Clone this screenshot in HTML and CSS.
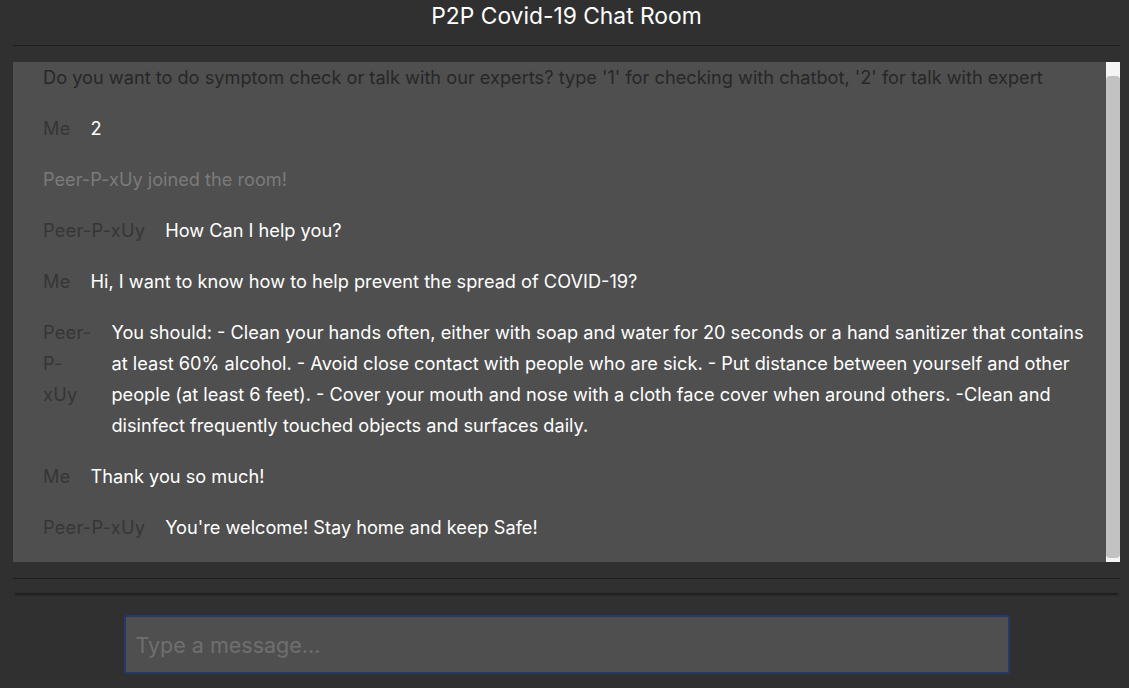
FILE: index.html
```html
<!DOCTYPE html>
<html lang="en">
<head>
<meta charset="utf-8">
<title>P2P Covid-19 Chat Room</title>
<link rel="stylesheet" href="styles.css">
</head>
<body>
<div class="app">
  <header class="header">
    <h1 class="title">P2P Covid-19 Chat Room</h1>
  </header>
  <section class="panel">
    <div class="messages">
      <div class="msg system-dark">Do you want to do symptom check or talk with our experts? type '1' for checking with chatbot, '2' for talk with expert</div>
      <div class="msg"><span class="sender">Me</span><span class="text">2</span></div>
      <div class="msg system">Peer-P-xUy joined the room!</div>
      <div class="msg"><span class="sender">Peer-P-xUy</span><span class="text">How Can I help you?</span></div>
      <div class="msg"><span class="sender">Me</span><span class="text">Hi, I want to know how to help prevent the spread of COVID-19?</span></div>
      <div class="msg"><span class="sender">Peer-P-xUy</span><span class="text">You should: - Clean your hands often, either with soap and water for 20 seconds or a hand sanitizer that contains at least 60% alcohol. - Avoid close contact with people who are sick. - Put distance between yourself and other people (at least 6 feet). - Cover your mouth and nose with a cloth face cover when around others. -Clean and disinfect frequently touched objects and surfaces daily.</span></div>
      <div class="msg"><span class="sender">Me</span><span class="text">Thank you so much!</span></div>
      <div class="msg"><span class="sender">Peer-P-xUy</span><span class="text">You're welcome! Stay home and keep Safe!</span></div>
    </div>
    <div class="scrollbar"><div class="thumb"></div></div>
  </section>
  <div class="divider"></div>
  <div class="shadow-line"></div>
  <form class="composer">
    <input class="input" type="text" placeholder="Type a message..." autofocus>
  </form>
</div>
</body>
</html>
```
FILE: styles.css
```css
html, body {
  margin: 0;
  padding: 0;
  background: #303030;
  height: 100%;
}
body {
  font-family: Inter, "Liberation Sans", sans-serif;
  color: #fff;
  overflow: hidden;
}
.app {
  padding: 0 9px 0 13px;
  display: flex;
  flex-direction: column;
}
.header {
  border-bottom: 1px solid #1d1d1d;
  padding-bottom: 13px;
}
.title {
  margin: 0;
  font-size: 22.8px;
  font-weight: 400;
  line-height: 32px;
  text-align: center;
  color: #fff;
}
.panel {
  margin-top: 16px;
  height: 500px;
  background: #4f4f4f;
  display: flex;
  overflow: hidden;
}
.messages {
  flex: 1;
  padding: 0 12px 0 30px;
  font-size: 18.2px;
  line-height: 31px;
}
.msg {
  display: flex;
  gap: 20px;
  margin-bottom: 20px;
}
.sender {
  color: #363636;
  flex: 0 1 auto;
  letter-spacing: 0.25px;
}
.text {
  flex: 1 1 auto;
  color: #fff;
}
.system-dark {
  color: #272727;
}
.system {
  color: #7b7b7b;
}
.scrollbar {
  width: 14px;
  flex: 0 0 14px;
  background: #f4f4f4;
  display: flex;
  justify-content: center;
  padding: 14px 0 4px;
  box-sizing: border-box;
}
.thumb {
  width: 8px;
  border-radius: 4px;
  background: #c2c2c2;
  flex: 1;
}
.divider {
  margin-top: 16px;
  border-top: 1px solid #1d1d1d;
}
.shadow-line {
  margin: 14px 2px 0;
  height: 1px;
  background: #1f1f1f;
  box-shadow: 0 1px 2px rgba(0,0,0,0.6);
}
.composer {
  margin: 21px 0 0;
  display: flex;
  justify-content: center;
}
.input {
  width: 886px;
  height: 59px;
  box-sizing: border-box;
  background: #4f4f4f;
  border: 2px solid #243a6c;
  border-radius: 3px;
  outline: none;
  padding: 0 10px;
  font-family: Inter, "Liberation Sans", sans-serif;
  font-size: 21.5px;
  color: #fff;
  caret-color: #fff;
}
.input::placeholder {
  color: #6f6f6f;
}
```
